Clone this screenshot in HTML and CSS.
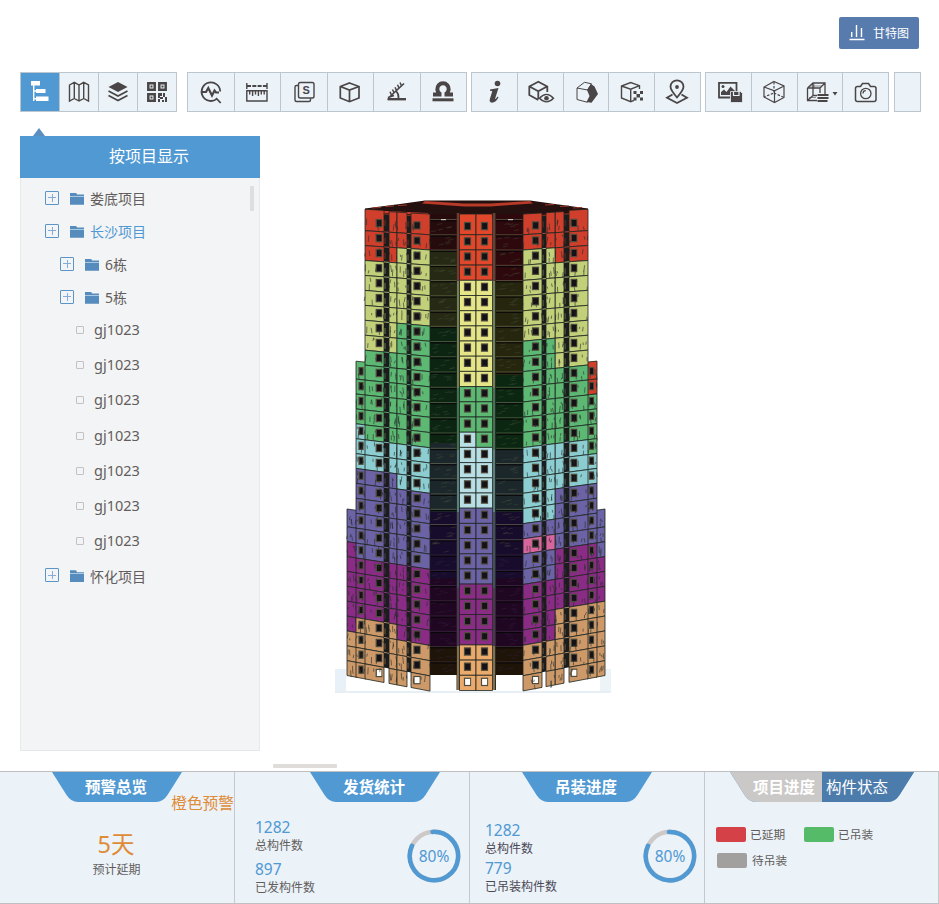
FILE: index.html
```html
<!DOCTYPE html>
<html lang="zh-CN">
<head>
<meta charset="utf-8">
<title>项目进度</title>
<link rel="stylesheet" href="styles.css">
</head>
<body>
<header class="topbar">
  <button class="gantt"><svg width="16" height="17" viewBox="0 0 16 17" fill="none" stroke="#fff" stroke-width="1.4"><path d="M0.5 15.5H15.5M2.7 13V8M7.5 13V1M12.5 13V4"/></svg><span>甘特图</span></button>
</header>
<nav class="toolbar">
  <div class="group g1">
    <a class="tool active"><svg class="ic" viewBox="0 0 24 24"><path class="w" d="M3 1h9v4.5H3zM8 9h9.5v4H8zM8 16.5h12.5V21H8zM5 5h1.4v16H5zM5 10.300h4v1.400H5zM5 18h4v1.400H5z"/></svg></a>
    <a class="tool"><svg class="ic" viewBox="0 0 24 24"><path d="M2.5 5L7.3 2.3L12 5L16.7 2.3L21.5 5V21L16.7 18.5L12 21L7.3 18.5L2.5 21ZM7.3 2.5V18.5M12 5V21M16.7 2.5V18.5"/></svg></a>
    <a class="tool"><svg class="ic" viewBox="0 0 24 24"><path class="f" d="M12 2L21.5 7L12 12L2.5 7Z"/><path d="M2.5 11L12 16L21.5 11M2.5 15.5L12 20.5L21.5 15.5" stroke-width="1.7"/></svg></a>
    <a class="tool"><svg class="ic" viewBox="0 0 24 24"><g stroke-width="2.5"><path d="M3.3 3.3h6.4v6.4H3.3zM14.3 3.3h6.4v6.4h-6.4zM3.3 14.3h6.4v6.4H3.3z"/></g><path class="f" d="M5.5 5.5h2v2h-2zM16.5 5.5h2v2h-2zM5.5 16.5h2v2h-2zM13 13h4v3h-2v2h-2zM18 13h2v4h-2zM20 17h2v5h-2zM13 19h2v3h-2zM15 17h3v2h-3zM17 20h2v2h-2z"/></svg></a>
  </div>
  <div class="group g2">
    <a class="tool"><svg class="ic" viewBox="0 0 24 24"><path d="M17.5 19.1A9.3 9.3 0 1 1 21.2 11.5M17 18L21.7 23" stroke-width="1.8"/><path d="M3 12H7L9.3 8L13 15.5L15.5 10.5L17 12.5H20" stroke-width="2.2"/></svg></a>
    <a class="tool"><svg class="ic" viewBox="0 0 24 24"><path d="M1.8 10.8H22V21H1.8ZM4.7 11v3.5M7.6 11v5M10.5 11v3.5M13.4 11v5M16.3 11v3.5M19.2 11v3.5M1.8 3v6M22 3v6"/><path d="M2 6H22" stroke-width="1.8" stroke-dasharray="4 1.3"/></svg></a>
    <a class="tool"><svg class="ic" viewBox="0 0 24 24"><rect x="6.5" y="2.5" width="15.5" height="15.5" rx="1.8"/><path d="M6 5.5H4.5Q3 5.5 3 7V20Q3 21.5 4.5 21.5H17Q18.5 21.5 18.5 20V18.5"/><text x="14.200" y="14.4" text-anchor="middle" class="s">S</text></svg></a>
    <a class="tool"><svg class="ic" viewBox="0 0 24 24"><path d="M11.5 3L21 6.5V18L11.5 21.7L2.3 18V6.5ZM2.3 6.5L11.5 10L21 6.5M11.5 10V21.5" stroke-width="1.7"/></svg></a>
    <a class="tool"><svg class="ic" viewBox="0 0 24 24"><path d="M2.500 19.200H21" stroke-width="2.400"/><path d="M4 17.500L19 3.500M11 11Q14 14 13.500 18M3 17.500L9 15.500" stroke-width="1.700"/><path d="M6.500 15L5 11.700M9 12.800L7.500 9.500M11.500 10.400L10 7.200M14 8L12.500 4.800M16.500 5.700L15 2.500" stroke-width="1.500"/></svg></a>
    <a class="tool"><svg class="ic" viewBox="0 0 24 24"><path d="M2 14.500H8.500V13.500A5.700 5.700 0 1 1 15.500 13.500V14.500H22" stroke-width="4"/><path d="M1.500 19.800H22.500" stroke-width="3"/></svg></a>
  </div>
  <div class="group g3">
    <a class="tool"><svg class="ic" viewBox="0 0 24 24"><circle class="f" cx="15.500" cy="3.5" r="2.8"/><path class="f" d="M8 9.500L16.500 8L13 19Q13.700 19.500 15.500 16.500L16.500 17.500Q13.500 22.700 10 22.700Q6.700 22.300 8 18.500L10.200 11.500Q9.500 10.500 8 11Z"/></svg></a>
    <a class="tool"><svg class="ic" viewBox="0 0 24 24"><path d="M10.3 20L1.3 15V6.5L10.3 1.7L19.3 6.5V12M1.5 6.5L10.3 11.2L19 6.5M10.3 11V19" stroke-width="1.8"/><path d="M11.5 18.3Q18.5 10.5 25.5 18.3Q18.5 25.5 11.5 18.3Z" class="bg"/><circle cx="18.5" cy="18.2" r="2.3" class="f"/></svg></a>
    <a class="tool"><svg class="ic" viewBox="0 0 24 24"><path d="M3 8L10.500 2.300L17.500 3.800L13.500 10L3 8V19.500L13.500 22.300" stroke-width="1"/><path class="f" d="M17 4L20.500 6.500L24 14L17.500 22.700L12.500 22L15.500 16L13 10Z"/></svg></a>
    <a class="tool"><svg class="ic" viewBox="0 0 24 24"><path d="M19.5 9V5.7L10.7 2.5L1.5 6V18L10.7 21.7L14 20.3M1.5 6L10.7 9.2L19.5 5.7M10.7 9.2V21" stroke-width="1.4"/><path class="f" d="M13.5 11h3v3h-3zM20 11h3v3h-3zM16.5 14h3.5v3.5h-3.5zM13.5 17.5h3v3h-3zM20 17.5h3v3h-3z"/></svg></a>
    <a class="tool"><svg class="ic" viewBox="0 0 24 24"><path d="M11 17.500Q4.500 10 4.500 6.800A6.500 6.500 0 0 1 17.500 6.800Q17.500 10 11 17.500Z" stroke-width="1.8"/><circle class="f" cx="11" cy="7" r="1.9"/><path d="M6.500 14.500L1 17.800L11 23L21 17.800L15.500 14.500" stroke-width="1.8"/></svg></a>
  </div>
  <div class="group g4">
    <a class="tool"><svg class="ic wide" viewBox="0 0 28 24"><path d="M5 2.800H22.500V17.500H5Z" stroke-width="1.8"/><circle class="f" cx="9" cy="6.500" r="1.500"/><path class="f" d="M7 15V12L10 9.500L12.500 12L16.500 6.500L21 11V15Z"/><path class="f save" d="M16.500 11.500H26.500L28.500 13.500V22.500H16.500Z"/><path class="slot" d="M19.500 12V15.500H25V12"/></svg></a>
    <a class="tool"><svg class="ic" viewBox="0 0 24 24"><path d="M12 1.500L22 6V17.500L12.500 22.500L2 17V7ZM2 7L12.500 10.800L22 6M12.500 10.800V22" stroke-width="1.2"/><path d="M12 2V13L2 17M12 13L22 17.500" stroke-width="1.200" stroke-dasharray="2.500 1.500"/></svg></a>
    <a class="tool"><svg class="ic shade" viewBox="0 0 32 24"><path d="M3.500 8L9 3H21V14M3.500 8V20.500H13M3.500 8H16V13M16 8L21 3M9 3V15.500H13M3.500 20.500L9 15.500" stroke-width="1.300"/><path d="M10 9V3.500M6 6H18M5 17.500H12" stroke-width=".6"/><path d="M13.500 15H24.500M13.500 18H24.500M13.500 21H23.500" stroke-width="1.900"/><path class="f" d="M28.500 12H33.500L31 15.500Z"/></svg></a>
    <a class="tool"><svg class="ic" viewBox="0 0 24 24"><path d="M3.500 6.500H6.500L8.500 3.500H14.500L16.500 6.500H20Q22 6.500 22 8.500V19.500Q22 21.500 20 21.500H3.500Q1.500 21.500 1.500 19.500V8.500Q1.500 6.500 3.500 6.500Z" stroke-width="1.500"/><circle cx="11.800" cy="13.500" r="5.200" stroke-width="1.300"/><path d="M9 13.500A2.800 2.800 0 0 1 11.800 10.700" stroke-width="1.200"/></svg></a>
  </div>
  <div class="group g5"><a class="tool"></a></div>
</nav>
<main class="work">
  <aside class="side">
    <div class="arrow"></div>
    <h2 class="side-title">按项目显示</h2>
    <div class="side-body">
      <ul class="tree">
        <li class="row"><i class="plus"></i><i class="folder"></i>娄底项目</li>
        <li class="row on"><i class="plus"></i><i class="folder"></i>长沙项目</li>
        <li class="row sub"><i class="plus"></i><i class="folder"></i>6栋</li>
        <li class="row sub"><i class="plus"></i><i class="folder"></i>5栋</li>
        <li class="leaf"><i class="box"></i>gj1023</li>
        <li class="leaf"><i class="box"></i>gj1023</li>
        <li class="leaf"><i class="box"></i>gj1023</li>
        <li class="leaf"><i class="box"></i>gj1023</li>
        <li class="leaf"><i class="box"></i>gj1023</li>
        <li class="leaf"><i class="box"></i>gj1023</li>
        <li class="leaf"><i class="box"></i>gj1023</li>
        <li class="row"><i class="plus"></i><i class="folder"></i>怀化项目</li>
      </ul>
      <div class="thumb"></div>
    </div>
  </aside>
  <section class="view">
    <svg id="model" width="290" height="510" viewBox="330 190 290 510"></svg>
    <div class="handle"></div>
  </section>
</main>
<footer class="stats">
  <section class="card c1">
    <h3 class="tab">预警总览</h3>
    <p class="alert">橙色预警</p>
    <p class="days">5天</p>
    <p class="label">预计延期</p>
  </section>
  <section class="card c2">
    <h3 class="tab">发货统计</h3>
    <div class="split">
      <div class="nums"><p class="num">1282</p><p class="label">总构件数</p><p class="num second">897</p><p class="label">已发构件数</p></div>
      <svg class="ring" width="54" height="54" viewBox="0 0 54 54"><circle cx="27" cy="27" r="24.200"/><path d="M25.500 2.900A24.200 24.200 0 1 1 5 16.800"/><text x="27" y="32.500">80%</text></svg>
    </div>
  </section>
  <section class="card c3">
    <h3 class="tab">吊装进度</h3>
    <div class="split">
      <div class="nums"><p class="num">1282</p><p class="label">总构件数</p><p class="num second">779</p><p class="label">已吊装构件数</p></div>
      <svg class="ring" width="54" height="54" viewBox="0 0 54 54"><circle cx="27" cy="27" r="24.200"/><path d="M26 2.900A24.200 24.200 0 1 1 5 16.800"/><text x="27" y="32.500">80%</text></svg>
    </div>
  </section>
  <section class="card c4">
    <div class="tab double"><span class="past">项目进度</span><span class="now">构件状态</span></div>
    <div class="legend">
      <span class="item"><i class="sw red"></i>已延期</span>
      <span class="item"><i class="sw green"></i>已吊装</span>
      <span class="item wait"><i class="sw grey"></i>待吊装</span>
    </div>
  </section>
</footer>
<script src="model.js"></script>
</body>
</html>
```
FILE: model.js
```js
// Draws the tower: every facade column is split into 31 floors coloured by status.
const C = {r: '#cf3f2c', y: '#c3d07a', Y: '#e6e688', g: '#5cb873', b: '#8ccdd1', B: '#b9dfe6',
  p: '#6c62a6', m: '#8a2c86', o: '#cd9969', k: '#d9659f', O: '#e9aa6c', R: '#e0472b'};
const AX = 476, FLOORS = 31;
let out = '';
let seed = 7;
const rnd = () => (seed = (seed * 16807) % 2147483647) / 2147483647;
const top0 = d => d < 22 ? 219.5 : 219.5 - (d - 48) * 0.06;
const bot0 = d => d < 22 ? 690.5 : 691.5 - (d - 44) * 16 / 85;
const yAt = (x, k) => { const d = Math.abs(x - AX); return top0(d) + (bot0(d) - top0(d)) * k / FLOORS; };
const f = n => n.toFixed(1);
const poly = (pts, fill, extra = '') => { out += `<polygon points="${pts.map(p => f(p[0]) + ',' + f(p[1])).join(' ')}" fill="${fill}" ${extra}/>`; };
const rect = (x, y, w, h, fill) => { out += `<rect x="${f(x)}" y="${f(y)}" width="${f(w)}" height="${f(h)}" fill="${fill}"/>`; };
const line = (x1, y1, x2, y2, c, w) => { out += `<line x1="${f(x1)}" y1="${f(y1)}" x2="${f(x2)}" y2="${f(y2)}" stroke="${c}" stroke-width="${w}"/>`; };

// plan: string such as "r3y6g6", expanded to one code per floor
const expand = s => s.replace(/([a-zA-Z])(\d+)/g, (_, c, n) => c.repeat(+n));

function column(x0, x1, from, plan, opt = {}) {
  const codes = expand(plan);
  for (let i = 0; i < codes.length; i++) {
    const k = from + i, last = k === FLOORS - 1;
    const cap = i === 0 ? (opt.cap || 0) : 0;
    const a = yAt(x0, k) - cap, b = yAt(x1, k) - cap, c = yAt(x1, k + 1), d = yAt(x0, k + 1);
    if (opt.dark) {
      if (!last) {
        poly([[x0, a], [x1, b], [x1, c], [x0, d]], '#1b1d1d');
        line(x0, a, x1, b, C[codes[i]], 0.7);
        line(x0 + 1, a + 6, x0 + 1, a + 12, C[codes[i]], 0.5);
      }
      continue;
    }
    poly([[x0, a], [x1, b], [x1, c], [x0, d]], C[codes[i]], 'stroke="#1d241f" stroke-width="0.8"');
    if (opt.win) {
      const cy = (yAt(opt.win, k) + yAt(opt.win, k + 1)) / 2 - 1;
      const w = opt.ww || 6;
      rect(opt.win - w / 2 - 0.6, cy - 4.2, w + 1.2, 8.4, '#504c3d');
      rect(opt.win - w / 2 + 0.6, cy - 3, w - 1, 6, last && w > 5 ? '#fff' : '#151217');
    }
    if (!opt.clean) {
      for (let n = 0; n < 3; n++) {
        const sx = x0 + rnd() * (x1 - x0), sy = a + cap + 2 + rnd() * 8;
        line(sx, sy, sx + rnd() * 2 - 1, sy + 2 + rnd() * 5, '#252b2a', 0.6);
      }
    }
  }
}

// pale ground plate
rect(335, 669, 11, 24, '#e8f1f7');
rect(600, 669, 11, 24, '#edf4f8');
rect(335, 691, 276, 2, '#e8eff4');

// roof opening and rear parapet
poly([[365, 208.500], [400, 204], [425, 200.500], [530, 200.500], [555, 204], [588, 208.500], [588, 218], [365, 218]], '#24100f');
poly([[425, 201], [464, 203.500], [490, 203.500], [530, 201], [533, 203.500], [490, 206.500], [464, 206.500], [422, 203.500]], '#b83a28');
poly([[365, 210], [428, 213], [428, 215], [365, 212]], '#cf3f2c');
[[372, 208], [385, 206.500], [398, 205.500], [545, 205], [560, 206.500], [573, 208]].forEach(p => line(p[0], p[1], p[0] + 9, p[1] - 0.5, '#9c3627', 1));

// shaded recesses
function recess(x0, x1, stops) {
  let y = 214;
  stops.forEach(([to, c]) => { rect(x0, y, x1 - x0, to - y, c); y = to; });
  for (let k = 0; k < 30; k++) {
    const ly = 219.5 + k * 15.25;
    line(x0, ly, x1, ly, k < 22 ? '#8a8f6c' : '#50405c', 0.45);
    line(x0, ly + 1.3, x1, ly + 1.3, '#080608', 1);
    for (let n = 0; n < 5; n++) {
      const sx = x0 + 2 + rnd() * (x1 - x0 - 9);
      const sy = ly + 3 + rnd() * 10;
      if (sy < 672) line(sx, sy, sx + 5, sy - 1, k < 22 ? '#46503a' : '#3b204c', 0.4);
    }
  }
}
recess(429, 459, [[250, '#260b0d'], [327, '#262a14'], [443, '#0c2513'], [512, '#1b272b'], [578, '#180c2c'], [646, '#1f0621'], [675, '#1e1407']]);
recess(495, 523, [[281, '#2d090d'], [375, '#26260f'], [450, '#0c2711'], [512, '#1b272b'], [578, '#180c2c'], [646, '#1f0621'], [675, '#1e1407']]);
line(441, 219.700, 446, 219.700, '#ddd', 1);
line(508, 219.700, 513, 219.700, '#ddd', 1);

// left wing
column(347, 357, 20, 'p2m6o3', {cap: 3});
column(356, 366, 10, 'g4b3p6m5o3'.replace('m5o3', 'm4o4'), {win: 361, ww: 4, cap: 3});
column(365, 384, 0, 'r3y6g6b2p6m4o4', {win: 379, ww: 5.500, cap: 6.500});
column(389, 397, 0, 'r3y6g6b2p6m4o4', {cap: 5.500});
column(384, 389, 0, 'r3y6g6b2p6m4o4', {dark: 1, cap: 3});
column(397, 407, 0, 'r2y5g8b3p5m5o3', {cap: 5.500});
column(407, 411, 0, 'r2y5g8b3p5m5o3', {dark: 1, cap: 3});
column(411, 430, 0, 'r2y5g8b3p5m5o3', {win: 417, cap: 5.500, ww: 6});

// right wing
column(596, 605, 20, 'p3m3o5', {cap: 3});
column(587, 597, 10, 'r2g4b2p4m4o5', {win: 591.500, ww: 4, cap: 3});
column(569, 588, 0, 'r3y7g5b3p4m4o5', {win: 574, ww: 5.500, cap: 6.500});
column(564, 569, 0, 'r3y7g5b3p4m4o5', {dark: 1, cap: 3});
column(555, 564, 0, 'r3y7g5b3p4m4o5', {cap: 5.500});
column(546, 555, 0, 'r2y6g7b5p1k1p2m4o3', {cap: 5.500});
column(542, 546, 0, 'r2y6g7b5p1k1p2m4o3', {dark: 1, cap: 3});
column(523, 542, 0, 'r2y6g7b5p1k1p2m4o3', {win: 535.500, cap: 5.500, ww: 6});

// central bay with its thin side pilasters
for (const x of [456.500, 492.500]) {
  [[213, 281, 'r'], [281, 388, 'y'], [388, 450, 'g'], [450, 512, 'b'], [512, 588, 'p'], [588, 646, 'm'], [646, 690, 'O']].forEach(([a, b, c]) => {
    rect(x, a, 3.500, b - a, '#26302a');
    rect(x + 1, a, 1, b - a, C[c]);
  });
}
column(459.500, 476, 0, 'R4Y7g3B5p5m4O3', {win: 467.500, clean: 1, cap: 5.500});
column(476, 492.500, 0, 'R4Y7g4B4p5m4O3', {win: 484.500, clean: 1, cap: 5.500});

document.getElementById('model').innerHTML = out;
```
FILE: styles.css
```css
* { box-sizing: border-box; }
body { margin: 0; width: 939px; height: 904px; overflow: hidden; background: #fff; color: #625d5c; font-family: "Noto Sans", "Noto Sans CJK SC", sans-serif; font-size: 14px; }
h2, h3, p, ul { margin: 0; padding: 0; font-weight: 400; list-style: none; }

.topbar { height: 72px; padding: 17px 20px 0 0; display: flex; justify-content: flex-end; align-items: flex-start; }
.gantt { width: 80px; height: 32px; padding: 0 0 1px; border: 0; border-radius: 2px; background: #587bae; color: #fff; display: flex; align-items: center; justify-content: center; gap: 8px; font: 12px/31px "Noto Sans CJK SC", sans-serif; }

.toolbar { display: flex; height: 40px; padding-left: 20px; }
.group { display: flex; border: 1px solid #bcc6ce; background: #ebf3f8; }
.g1 { width: 157px; margin-right: 10px; }
.g2 { width: 280px; margin-right: 4px; }
.g3 { width: 230px; margin-right: 4px; }
.g4 { width: 184px; margin-right: 5px; }
.g5 { width: 27px; }
.tool { flex: 1; display: flex; align-items: center; justify-content: center; }
.tool + .tool { border-left: 1px solid #bcc6ce; }
.tool.active { background: #5099d3; }
.ic { width: 24px; height: 24px; overflow: visible; fill: none; stroke: #4a4546; stroke-width: 1.4; }
.ic.wide { width: 28px; }
.ic.shade { width: 32px; }
.ic .f { fill: #4a4546; stroke: none; }
.ic .w { fill: #fff; stroke: none; }
.ic .bg { fill: #ebf3f8; }
.ic .save { stroke: #ebf3f8; stroke-width: .8; }
.ic .slot { stroke: #ebf3f8; stroke-width: 1.2; }
.ic .s { font: bold 11px "Liberation Sans", sans-serif; fill: #4a4546; stroke: none; }

.work { display: flex; height: 659px; }
.side { width: 240px; margin-left: 20px; padding-top: 16px; }
.arrow { width: 0; height: 8px; margin-left: 13px; border: 6px solid transparent; border-top: 0; border-bottom: 8px solid #5a8fc0; }
.side-title { height: 42px; background: #5099d3; color: #fff; font-size: 16px; line-height: 40px; text-align: center; padding-left: 18px; }
.side-body { display: flex; justify-content: space-between; height: 573px; background: #f3f4f5; border: 1px solid #e6e9ec; border-top: 0; padding: 4px 5px 0 24px; }
.thumb { width: 4px; height: 25px; margin-top: 4px; background: #dedede; }
.row { display: flex; align-items: center; height: 33px; line-height: 33px; }
.row.sub { padding-left: 15px; }
.row.on { color: #5099d3; }
.leaf + .row { margin-top: 2px; }
.plus { width: 14px; height: 14px; margin: 0 11px 2px 0; border: 1px solid #5b94c8; border-radius: 1px; background: linear-gradient(#84acd6, #84acd6) center / 8px 1px no-repeat, linear-gradient(#84acd6, #84acd6) center / 1px 8px no-repeat; }
.folder { width: 14px; height: 12px; margin-right: 6px; background: linear-gradient(transparent 3px, #a9c8e2 3px, #a9c8e2 4px, #568bbd 4px); clip-path: polygon(0 0, 6px 0, 7px 2px, 14px 2px, 14px 12px, 0 12px); background-color: #568bbd; }
.leaf { display: flex; align-items: center; height: 35.2px; padding-left: 31px; font-size: 14.5px; }
.row + .leaf { margin-top: -2.500px; }
.box { width: 8px; height: 8px; margin: 2px 10px 0 0; border: 1px solid #c2c2c2; border-radius: 1px; }

.view { flex: 1; padding-top: 78px; }
#model { display: block; margin-left: 70px; filter: blur(.3px); }
.handle { width: 64px; height: 4px; margin: 64px 0 0 13px; border-radius: 1px; background: #dfdcda; }

.stats { display: grid; grid-template-columns: 235px 235px 235px 234px; height: 133px; background: #ebf2f8; border-top: 1px solid #bfc0c4; border-bottom: 1px solid #bfc0c4; }
.card { border-right: 1px solid #c6c8cc; }
.tab { width: 130px; height: 30px; margin-left: 52px; background: #5099d3; clip-path: path("M0 0H130L115.500 23Q111 30 104 30H26Q19 30 14.500 23Z"); color: #fff; font-size: 15.500px; font-weight: 700; line-height: 31px; text-align: center; padding-right: 2px; }
.c2 .tab { margin-left: 75px; }
.label { font-size: 12px; line-height: 16px; }
.alert { height: 24px; margin-top: -11px; text-align: right; color: #e08b36; font-size: 15.700px; line-height: 24px; }
.days { margin-top: 16px; padding-right: 2px; text-align: center; color: #e08b36; font-size: 23.500px; line-height: 27px; }
.c1 .label { padding-right: 1px; margin-top: 4px; text-align: center; }
.split { display: flex; justify-content: space-between; padding: 16px 8px 0 20px; }
.num { color: #5099d3; font-size: 15.500px; line-height: 18px; }
.num + .label { margin-top: 2px; }
.num.second { margin-top: 6px; }
.c3 .split { padding: 19px 7px 0 15px; }
.c3 .num.second { margin-top: 2px; }
.c3 .label { color: #4b4856; }
.ring { margin-top: 11px; }
.c3 .ring { margin-top: 8px; }
.ring circle { fill: none; stroke: #cdc9c9; stroke-width: 4.500; }
.ring path { fill: none; stroke: #5099d3; stroke-width: 4.500; stroke-linecap: round; }
.ring text { fill: #5099d3; font-size: 15.500px; text-anchor: middle; }

.tab.double { display: flex; width: 184px; margin-left: 25px; padding: 0; clip-path: path("M0 0H184L169.500 23Q165 30 158 30H26Q19 30 14.500 23Z"); }
.past, .now { width: 92px; background: #cbc8c8; text-align: right; padding-right: 7px; }
.now { background: #4c7cac; font-weight: 400; text-align: left; padding: 0 0 0 4px; }
.legend { display: grid; grid-template-columns: 88px 88px; row-gap: 8px; padding: 23px 0 0 11px; }
.item { display: flex; align-items: center; height: 18px; font-size: 11.700px; line-height: 16px; padding-bottom: 1px; }
.item.wait { padding-left: 1px; }
.sw { width: 30px; height: 15px; margin: 1px 4px 0 0; border-radius: 2px; }
.wait .sw { margin-right: 5px; }
.red { background: #d44146; }
.green { background: #55bb69; }
.grey { background: #a29f9f; }
```
